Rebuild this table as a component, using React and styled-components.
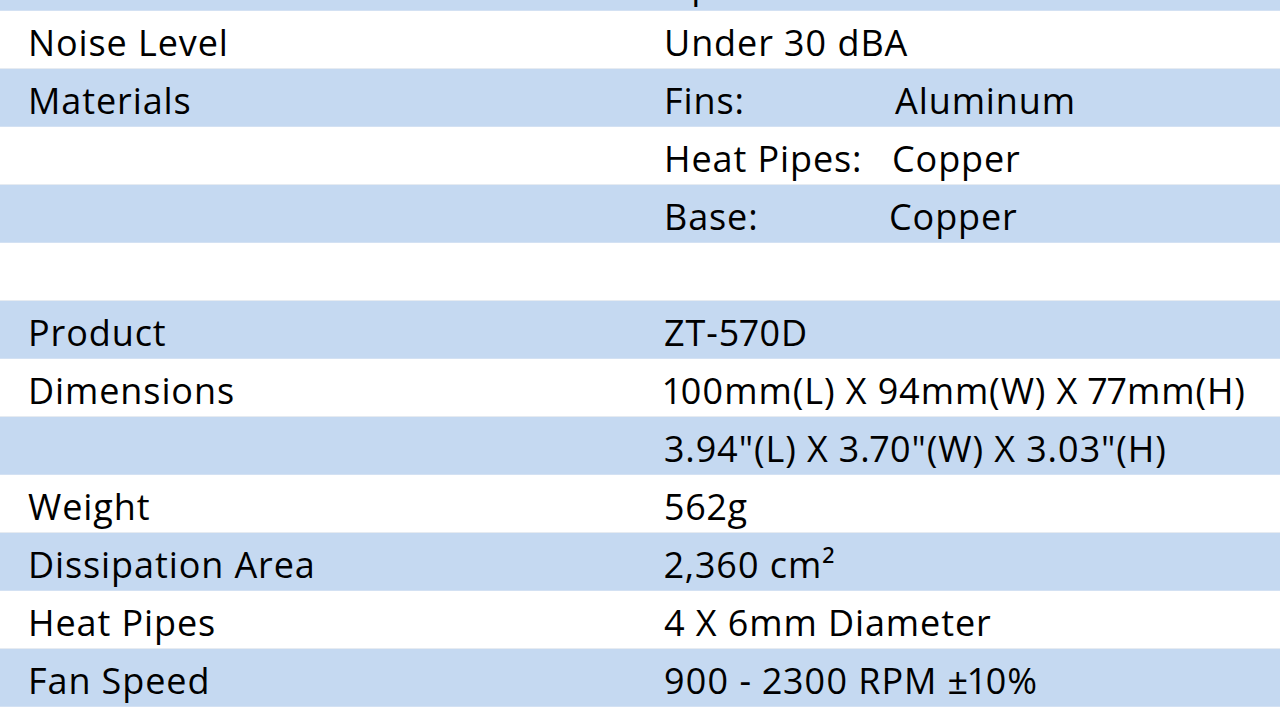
import React from "react";
import styled, { createGlobalStyle } from "styled-components";

const Global = createGlobalStyle`
  html, body { margin: 0; padding: 0; background: #ffffff; }
  body { overflow: hidden; }
  #root { width: 1280px; height: 722px; overflow: hidden; }
`;

const Sheet = styled.div`
  display: flex;
  flex-direction: column;
  margin-top: -47px;
  font-family: "Open Sans", Lato, sans-serif;
  font-size: 36px;
  letter-spacing: 0.9px;
  font-variant-numeric: proportional-nums;
  color: #000;
`;

const Row = styled.div`
  display: grid;
  grid-template-columns: 636px 1fr;
  height: 58px;
  box-sizing: border-box;
  border-bottom: 1px solid ${(p) => (p.$shaded ? "#d3e1f3" : "#e6ebf1")};
  background: ${(p) => (p.$shaded ? "#c5d9f1" : "#ffffff")};
`;

const Cell = styled.div`
  padding: 10px 0 0 28px;
  line-height: 43px;
  white-space: nowrap;
  overflow: hidden;
`;

const Pair = styled.div`
  display: flex;
`;

const PairLabel = styled.span`
  width: ${(p) => p.$w}px;
  flex: none;
`;

const rows = [
  { label: "", value: "Up to 52 CFM" },
  { label: "Noise Level", value: "Under 30 dBA" },
  { label: "Materials", pair: ["Fins:", "Aluminum", 231] },
  { label: "", pair: ["Heat Pipes:", "Copper", 228] },
  { label: "", pair: ["Base:", "Copper", 225] },
  { label: "", value: "" },
  { label: "Product", value: "ZT-570D" },
  { label: "Dimensions", value: "100mm(L) X 94mm(W) X 77mm(H)" },
  { label: "", value: '3.94"(L) X 3.70"(W) X 3.03"(H)' },
  { label: "Weight", value: "562g" },
  { label: "Dissipation Area", value: "2,360 cm²" },
  { label: "Heat Pipes", value: "4 X 6mm Diameter" },
  { label: "Fan Speed", value: "900 - 2300 RPM ±10%" },
  { label: "", value: "" },
];

export default function App() {
  return (
    <>
      <Global />
      <Sheet>
        {rows.map((r, i) => (
          <Row key={i} $shaded={i % 2 === 0}>
            <Cell>{r.label}</Cell>
            <Cell>
              {r.pair ? (
                <Pair>
                  <PairLabel $w={r.pair[2]}>{r.pair[0]}</PairLabel>
                  <span>{r.pair[1]}</span>
                </Pair>
              ) : (
                r.value
              )}
            </Cell>
          </Row>
        ))}
      </Sheet>
    </>
  );
}
